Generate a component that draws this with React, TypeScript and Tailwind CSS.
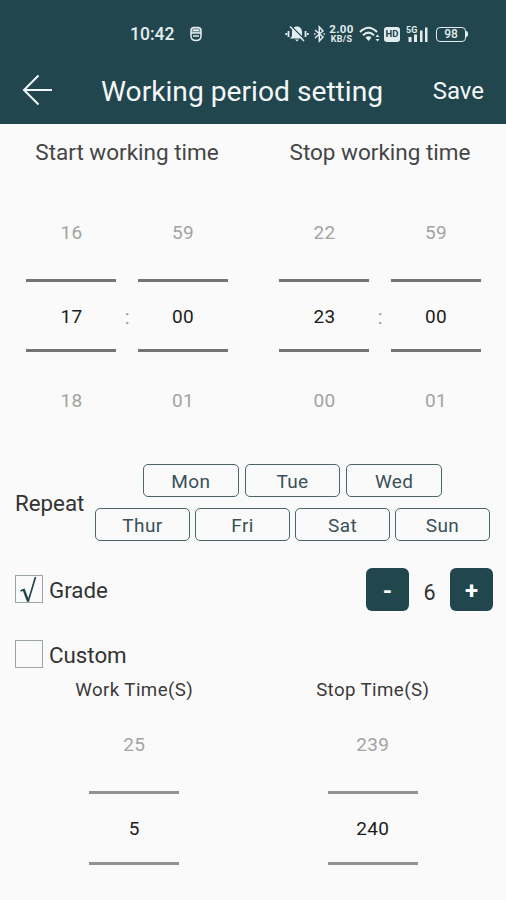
import React, { useState } from 'react';

function StatusBar() {
  return (
    <div className="flex h-[68px] items-center pl-[130px] pr-[38px] text-[#e3ecee]">
      <span className="w-[60px] pt-px text-[17.5px] font-medium">10:42</span>
      <svg width="12" height="16" viewBox="0 0 12 16" fill="none" stroke="currentColor" strokeWidth="1.5">
        <path d="M1 7V4.5Q1 1.5 4 1.5H8Q11 1.5 11 4.5V7Z" fill="currentColor" fillOpacity="0.45" />
        <path d="M1 7V10Q1 14.5 6 14.5T11 10V7M3 4.3H9M3 10H9" />
      </svg>
      <div className="ml-auto flex items-center">
        {/* Muted bell */}
        <svg width="24" height="18" viewBox="0 0 24 18" className="mr-[4px]">
          <path d="M12 1.5C8.5 1.5 7 4 7 7V11L5 13.5H19L17 11V7C17 4 15.5 1.5 12 1.5ZM10 14.5H14L12 16.5Z" fill="currentColor" />
          <path d="M3.5 6V12M1.2 8V10M20.5 6V12M22.8 8V10" stroke="currentColor" strokeWidth="1.8" />
          <path d="M6.5 1.5L20 15" stroke="#21464d" strokeWidth="1.4" />
          <path d="M5 1.5L19 16" stroke="currentColor" strokeWidth="1.4" />
        </svg>
        <svg width="13" height="18" viewBox="0 0 13 18" className="mr-[2px]" fill="none" stroke="currentColor" strokeWidth="1.5">
          <path d="M2 5L10 12L6.3 16V2L10 6L2 13M1 9H2.5M10.5 9H12" />
        </svg>
        <div className="mr-[4px] flex w-[27px] flex-col items-center font-bold">
          <div className="h-[9px] text-[11.5px] leading-[9px] tracking-[0.3px]">2.00</div>
          <div className="mt-px h-[8px] text-[9px] leading-[9px] tracking-[0.3px]">KB/S</div>
        </div>
        <svg width="22" height="18" viewBox="0 0 22 18" className="mr-[3px]" fill="none" stroke="currentColor" strokeWidth="2">
          <path d="M1 7Q9.5 -1.5 18 7M4 10.3Q9.5 5 15 10.3" />
          <path d="M6.5 12.5Q9.5 10 12.5 12.5L9.5 16Z" fill="currentColor" stroke="none" />
          <path d="M16.5 12L18.5 9.5L20.5 12ZM16.5 14L18.5 16.5L20.5 14Z" fill="currentColor" stroke="none" />
        </svg>
        <div className="mr-[6px] flex h-[15px] w-[16px] items-center justify-center rounded-[3px] bg-[#e3ecee] text-[9.5px] font-bold text-[#21464d]">
          HD
        </div>
        <svg width="23" height="18" viewBox="0 0 23 18" className="mr-[7px] overflow-visible" fill="currentColor">
          <text x="0" y="7.5" fontSize="9" fontWeight="700">5G</text>
          <path d="M2.5 12H5.5V17H2.5ZM8 9.5H11V17H8ZM14 5.5H16.5V17H14ZM19 2.5H21.5V17H19Z" />
        </svg>
        <div className="flex h-[15px] w-[30px] items-center justify-center rounded-[4px] border-[1.5px] border-current text-[12px] font-medium">
          98
        </div>
        <div className="h-[6px] w-[2px] rounded-r bg-[#e3ecee]" />
      </div>
    </div>
  );
}

function Wheel({ values, light }: { values: string[]; light?: boolean }) {
  const line = light ? 'h-[74px] pt-[3px] border-[#929292]' : 'h-[73px] -mt-[2px] pt-[4px] border-[#747474]';
  return (
    <div className="flex w-[90px] flex-col items-center text-[19px] tracking-[0.3px]">
      <div className="flex h-[84px] items-center pt-[2px] text-[#a3a3a3]">{values[0]}</div>
      <div className="flex h-[84px] w-full items-center">
        <div className={`flex w-full items-center justify-center border-y-[3px] text-[#1c1c1c] ${line}`}>{values[1]}</div>
      </div>
      {values[2] && <div className="flex h-[84px] items-center pt-[2px] text-[#a3a3a3]">{values[2]}</div>}
    </div>
  );
}

function TimePicker({ hours, minutes }: { hours: string[]; minutes: string[] }) {
  return (
    <div className="flex flex-1 items-center pl-[26.4px]">
      <Wheel values={hours} />
      <span className="w-[21.5px] pt-[2px] text-center text-[20px] text-[#a3a3a3]">:</span>
      <Wheel values={minutes} />
    </div>
  );
}

function DayButton({ label, selected, onClick }: { label: string; selected: boolean; onClick: () => void }) {
  return (
    <button
      onClick={onClick}
      className={`h-[33px] flex-1 rounded-[5px] border border-[#49666b] pt-px text-[19px] leading-none tracking-[0.4px] ${selected ? 'bg-[#21464d] text-white' : 'text-[#395158]'}`}
    >
      {label}
    </button>
  );
}

function CheckBox({ label, checked, onClick }: { label: string; checked: boolean; onClick: () => void }) {
  return (
    <button onClick={onClick} className="flex items-center gap-[6px] text-[22.3px] leading-none text-[#333333]">
      <span className="flex size-[28px] items-center justify-center border border-[#9aa5a7]">
        {checked && (
          <svg width="26" height="26" viewBox="0 0 26 26" fill="none" stroke="#21464d">
            <path d="M4.5 15L8 13.5" strokeWidth="1.5" />
            <path d="M7.5 13L12 25" strokeWidth="2.4" />
            <path d="M12 26L19.5 1" strokeWidth="1.7" />
          </svg>
        )}
      </span>
      <span className="pt-[3px]">{label}</span>
    </button>
  );
}

export default function App() {
  const [days, setDays] = useState<string[]>([]);
  const [mode, setMode] = useState('grade');
  const [grade, setGrade] = useState(6);

  const toggleDay = (d: string) => setDays(days.includes(d) ? days.filter(x => x !== d) : [...days, d]);

  return (
    <div className="flex h-[900px] w-[506px] flex-col overflow-hidden bg-[#fafafa] font-[Roboto,sans-serif]">
      <div className="h-[124px] bg-[#21464d]">
        <StatusBar />
        <div className="flex h-[46px] items-center pl-[22px] pr-[22px] text-[#f4f7f8]">
          <svg width="32" height="32" viewBox="0 0 32 32" fill="none" stroke="currentColor" strokeWidth="2" className="-mt-[3px]">
            <path d="M16.5 1.5L2 16L16.5 30.5M2 16H30" />
          </svg>
          <h1 className="ml-[47px] pt-[2px] text-[28.2px]">Working period setting</h1>
          <button className="ml-auto text-[24px]">Save</button>
        </div>
      </div>

      {/* Start / stop time */}
      <div className="flex h-[66px] pt-[12px] text-[22.5px] text-[#454545]">
        <div className="w-[254px] text-center leading-[32px]">Start working time</div>
        <div className="flex-1 text-center leading-[32px]">Stop working time</div>
      </div>
      <div className="flex">
        <TimePicker hours={['16', '17', '18']} minutes={['59', '00', '01']} />
        <TimePicker hours={['22', '23', '00']} minutes={['59', '00', '01']} />
      </div>

      {/* Repeat days */}
      <div className="mt-[22px] flex items-center pl-[15px] pr-[16px]">
        <span className="w-[80px] pt-[2px] text-[22.3px] text-[#333333]">Repeat</span>
        <div className="flex flex-1 flex-col gap-[11px]">
          <div className="flex gap-[6px] px-[48px]">
            {['Mon', 'Tue', 'Wed'].map(d => <DayButton key={d} label={d} selected={days.includes(d)} onClick={() => toggleDay(d)} />)}
          </div>
          <div className="flex gap-[5px]">
            {['Thur', 'Fri', 'Sat', 'Sun'].map(d => <DayButton key={d} label={d} selected={days.includes(d)} onClick={() => toggleDay(d)} />)}
          </div>
        </div>
      </div>

      {/* Grade */}
      <div className="mt-[27px] flex h-[43px] items-center justify-between pl-[15px] pr-[13px]">
        <div className="pb-[2px]">
          <CheckBox label="Grade" checked={mode === 'grade'} onClick={() => setMode('grade')} />
        </div>
        <div className="flex items-center">
          <button onClick={() => setGrade(grade - 1)} className="size-[43px] rounded-[6px] bg-[#21464d] pt-[2px] text-[24px] font-bold text-white">-</button>
          <span className="w-[41px] pt-[7px] text-center text-[21.5px] text-[#333333]">{grade}</span>
          <button onClick={() => setGrade(grade + 1)} className="size-[43px] rounded-[6px] bg-[#21464d] pt-[2px] text-[24px] font-bold text-white">+</button>
        </div>
      </div>

      {/* Custom */}
      <div className="mt-[29px] pl-[15px]">
        <CheckBox label="Custom" checked={mode === 'custom'} onClick={() => setMode('custom')} />
      </div>
      <div className="mt-[7px] flex pl-[15px] pr-[14px] text-[18.7px] tracking-[0.4px] text-[#3a3a3a]">
        <div className="flex flex-1 flex-col items-center">
          <div className="h-[27px] leading-[30px]">Work Time(S)</div>
          <Wheel values={['25', '5']} light />
        </div>
        <div className="flex flex-1 flex-col items-center">
          <div className="h-[27px] leading-[30px]">Stop Time(S)</div>
          <Wheel values={['239', '240']} light />
        </div>
      </div>
    </div>
  );
}
